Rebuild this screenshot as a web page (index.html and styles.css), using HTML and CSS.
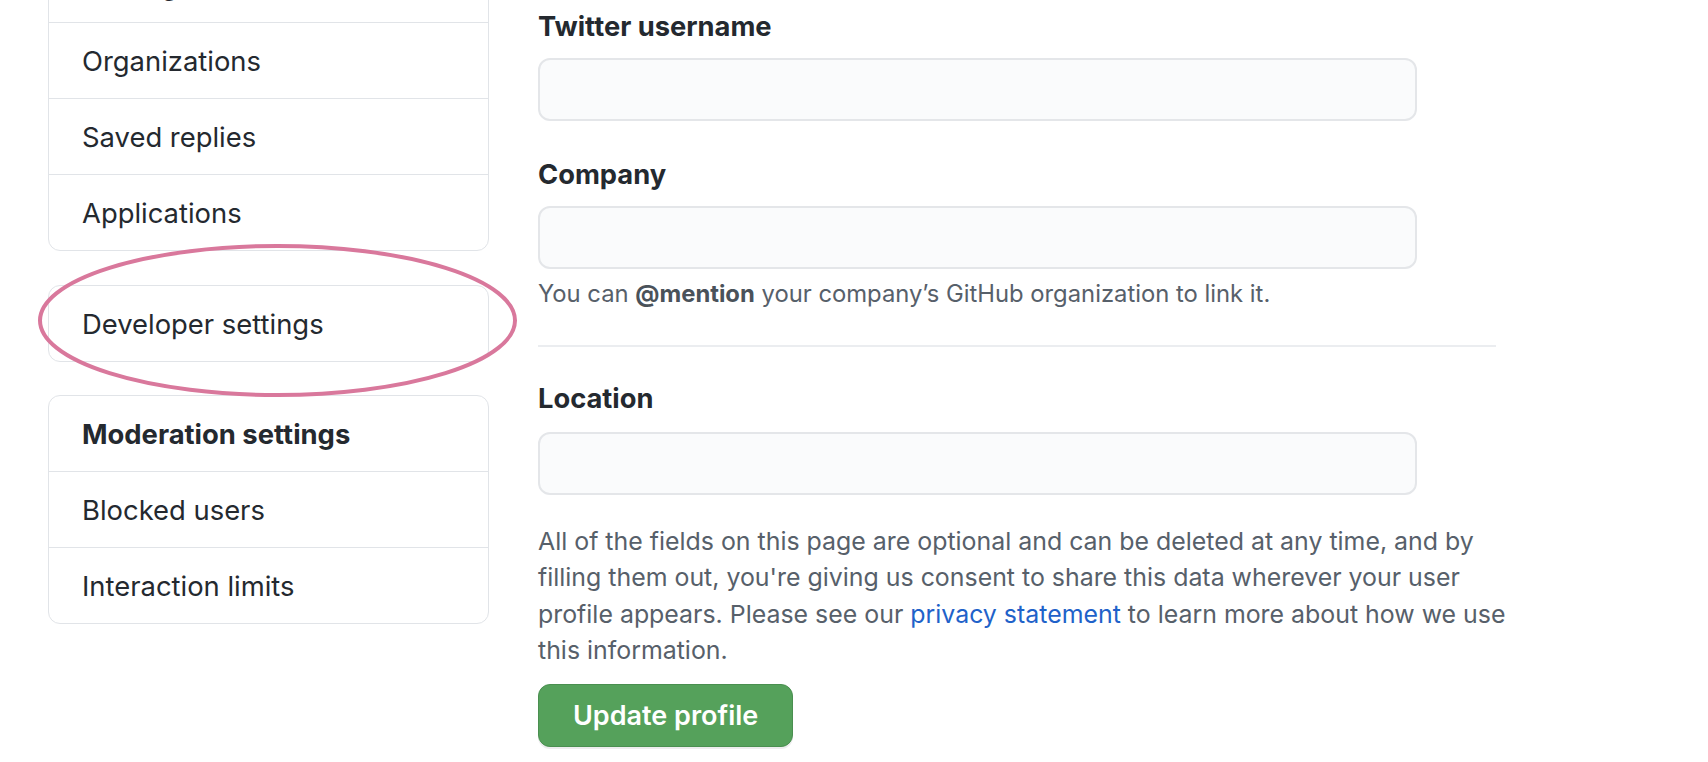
FILE: index.html
```html
<!DOCTYPE html>
<html lang="en">
<head>
<meta charset="utf-8">
<title>Settings</title>
<link rel="stylesheet" href="styles.css">
</head>
<body>
<div class="page">
  <nav class="sidebar">
    <div class="menu">
      <a class="menu-item" href="#">Packages</a>
      <a class="menu-item" href="#">Organizations</a>
      <a class="menu-item" href="#">Saved replies</a>
      <a class="menu-item" href="#">Applications</a>
    </div>
    <div class="menu">
      <a class="menu-item" href="#">Developer settings</a>
    </div>
    <div class="menu menu-mod">
      <div class="menu-item menu-heading">Moderation settings</div>
      <a class="menu-item" href="#">Blocked users</a>
      <a class="menu-item" href="#">Interaction limits</a>
    </div>
  </nav>
  <main class="content">
    <div class="form-group first">
      <label class="label" for="twitter">Twitter username</label>
      <input class="input" id="twitter" type="text">
    </div>
    <div class="form-group">
      <label class="label" for="company">Company</label>
      <input class="input" id="company" type="text">
      <p class="note">You can <strong>@mention</strong> your company’s GitHub organization to link it.</p>
    </div>
    <hr class="divider">
    <div class="form-group loc">
      <label class="label" for="location">Location</label>
      <input class="input" id="location" type="text">
    </div>
    <p class="para">All of the fields on this page are optional and can be deleted at any time, and by filling them out, you're giving us consent to share this data wherever your user profile appears. Please see our <a class="link" href="#">privacy statement</a> to learn more about how we use this information.</p>
    <button class="btn" type="button">Update profile</button>
  </main>
</div>
<svg class="annotation" width="488" height="162" viewBox="0 0 488 162" aria-hidden="true">
  <ellipse cx="243.5" cy="80.5" rx="237.5" ry="74.5" fill="none" stroke="#d9789c" stroke-width="4"/>
</svg>
</body>
</html>
```
FILE: styles.css
```css
* { box-sizing: border-box; }

html, body {
  margin: 0;
  padding: 0;
  background: #ffffff;
}

body {
  font-family: Inter, "Noto Sans", "Liberation Sans", sans-serif;
  color: #24292f;
  position: relative;
  height: 762px;
  overflow: hidden;
}

.page {
  display: flex;
  align-items: flex-start;
  padding-left: 48px;
  gap: 49px;
}

.sidebar {
  width: 441px;
  margin-top: -54px;
  display: flex;
  flex-direction: column;
  gap: 34px;
}

.menu {
  border: 1px solid #e1e4e8;
  border-radius: 12px;
  overflow: hidden;
}

.menu-mod {
  margin-top: -1px;
}

.menu-item {
  display: block;
  height: 75px;
  padding: 2px 0 0 33px;
  line-height: 73px;
  font-size: 27.4px;
  color: #24292f;
  text-decoration: none;
  white-space: nowrap;
}

.menu-item + .menu-item {
  border-top: 1px solid #e1e4e8;
  height: 76px;
}

.menu-heading {
  font-weight: 700;
}

.content {
  width: 958px;
}

.form-group {
  margin-top: 34px;
}

.form-group.first {
  margin-top: 7px;
}

.form-group.loc {
  margin-top: 32px;
}

.label {
  display: block;
  font-size: 27.3px;
  font-weight: 700;
  line-height: 40px;
  margin-bottom: 11px;
}

.loc .label {
  margin-bottom: 13px;
}

.input {
  display: block;
  width: 879px;
  height: 63px;
  border: 2px solid #e4e6e9;
  border-radius: 12px;
  background: #fafbfc;
  font: inherit;
  font-size: 27px;
  padding: 0 24px;
}

.note {
  margin: 7px 0 0;
  font-size: 23.8px;
  line-height: 36px;
  color: #57606a;
}

.note strong {
  font-weight: 700;
  color: #4a525a;
}

.divider {
  border: 0;
  border-top: 2px solid #ebedf0;
  margin: 33px 0 0;
  height: 0;
}

.para {
  width: 970px;
  margin: 28px 0 0;
  font-size: 24.9px;
  line-height: 36.3px;
  color: #57606a;
}

.link {
  color: #1f62c9;
  text-decoration: none;
}

.btn {
  display: block;
  margin-top: 16px;
  height: 63px;
  padding: 0 34px;
  border: 1px solid #4a8f50;
  border-radius: 12px;
  background: #55a15b;
  color: #ffffff;
  font: inherit;
  font-size: 27px;
  font-weight: 600;
  box-shadow: 0 2px 0 rgba(27, 31, 36, 0.08);
}

.annotation {
  position: absolute;
  left: 34px;
  top: 240px;
  pointer-events: none;
}
```
